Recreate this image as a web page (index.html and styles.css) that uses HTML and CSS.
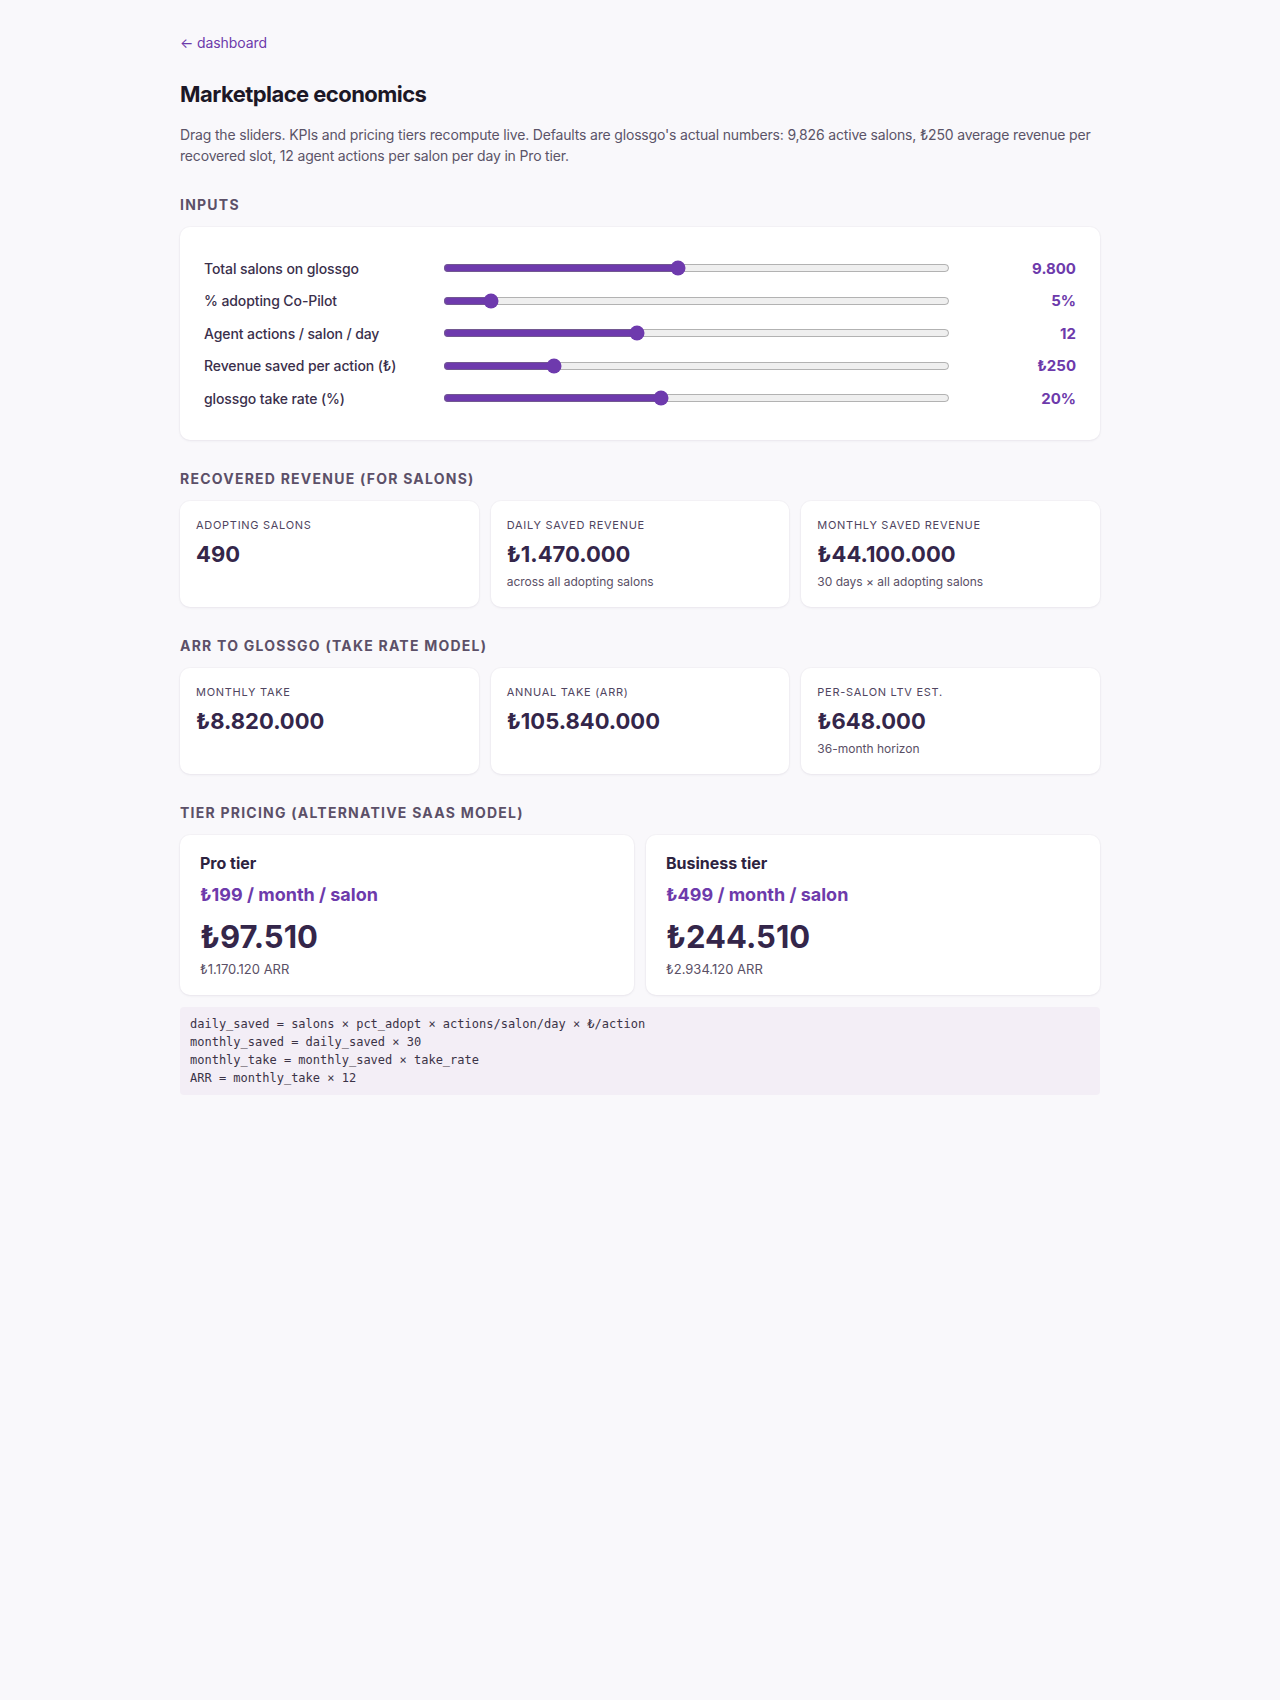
FILE: index.html
```html
<!DOCTYPE html>
<html lang="en">
<head>
<meta charset="utf-8">
<title>Marketplace economics</title>
<link rel="stylesheet" href="styles.css">
</head>
<body>
<main class="page">
  <a class="back" href="#">← dashboard</a>
  <h1 class="title">Marketplace economics</h1>
  <p class="intro">Drag the sliders. KPIs and pricing tiers recompute live. Defaults are glossgo's actual numbers: 9,826 active salons, ₺250 average revenue per recovered slot, 12 agent actions per salon per day in Pro tier.</p>

  <section class="section">
    <h2 class="section-title">Inputs</h2>
    <div class="card inputs">
      <div class="slider-row">
        <label class="slider-label" for="s1">Total salons on glossgo</label>
        <input class="slider" id="s1" type="range" min="1000" max="20000" step="100" value="9800">
        <span class="slider-value">9.800</span>
      </div>
      <div class="slider-row">
        <label class="slider-label" for="s2">% adopting Co-Pilot</label>
        <input class="slider" id="s2" type="range" min="1" max="50" step="1" value="5">
        <span class="slider-value">5%</span>
      </div>
      <div class="slider-row">
        <label class="slider-label" for="s3">Agent actions / salon / day</label>
        <input class="slider" id="s3" type="range" min="1" max="30" step="1" value="12">
        <span class="slider-value">12</span>
      </div>
      <div class="slider-row">
        <label class="slider-label" for="s4">Revenue saved per action (₺)</label>
        <input class="slider" id="s4" type="range" min="50" max="1000" step="10" value="250">
        <span class="slider-value">₺250</span>
      </div>
      <div class="slider-row">
        <label class="slider-label" for="s5">glossgo take rate (%)</label>
        <input class="slider" id="s5" type="range" min="5" max="40" step="1" value="20">
        <span class="slider-value">20%</span>
      </div>
    </div>
  </section>

  <section class="section">
    <h2 class="section-title">Recovered revenue (for salons)</h2>
    <div class="kpi-grid">
      <div class="card kpi">
        <div class="kpi-label">Adopting salons</div>
        <div class="kpi-value">490</div>
      </div>
      <div class="card kpi">
        <div class="kpi-label">Daily saved revenue</div>
        <div class="kpi-value">₺1.470.000</div>
        <div class="kpi-sub">across all adopting salons</div>
      </div>
      <div class="card kpi">
        <div class="kpi-label">Monthly saved revenue</div>
        <div class="kpi-value">₺44.100.000</div>
        <div class="kpi-sub">30 days × all adopting salons</div>
      </div>
    </div>
  </section>

  <section class="section">
    <h2 class="section-title">ARR to glossgo (take rate model)</h2>
    <div class="kpi-grid">
      <div class="card kpi">
        <div class="kpi-label">Monthly take</div>
        <div class="kpi-value">₺8.820.000</div>
      </div>
      <div class="card kpi">
        <div class="kpi-label">Annual take (ARR)</div>
        <div class="kpi-value">₺105.840.000</div>
      </div>
      <div class="card kpi">
        <div class="kpi-label">Per-salon LTV est.</div>
        <div class="kpi-value">₺648.000</div>
        <div class="kpi-sub">36-month horizon</div>
      </div>
    </div>
  </section>

  <section class="section">
    <h2 class="section-title">Tier pricing (alternative SaaS model)</h2>
    <div class="tier-grid">
      <div class="card tier">
        <div class="tier-name">Pro tier</div>
        <div class="tier-price">₺199 / month / salon</div>
        <div class="tier-total">₺97.510</div>
        <div class="tier-arr">₺1.170.120 ARR</div>
      </div>
      <div class="card tier">
        <div class="tier-name">Business tier</div>
        <div class="tier-price">₺499 / month / salon</div>
        <div class="tier-total">₺244.510</div>
        <div class="tier-arr">₺2.934.120 ARR</div>
      </div>
    </div>
    <pre class="formula">daily_saved = salons × pct_adopt × actions/salon/day × ₺/action
monthly_saved = daily_saved × 30
monthly_take = monthly_saved × take_rate
ARR = monthly_take × 12</pre>
  </section>
</main>
</body>
</html>
```

FILE: styles.css
```css
* { box-sizing: border-box; }

html, body {
  margin: 0;
  padding: 0;
  background: #f9f8fb;
}

body {
  font-family: Inter, "Noto Sans", "DejaVu Sans", sans-serif;
  color: #2e2540;
  -webkit-font-smoothing: antialiased;
}

.page {
  max-width: 920px;
  margin: 0 auto;
  padding: 32px 0 40px;
}

.back {
  display: inline-block;
  color: #6d3aab;
  text-decoration: none;
  font-size: 14px;
  line-height: 20px;
  letter-spacing: -0.1px;
}

.title {
  margin: 26px 0 0;
  font-size: 22px;
  line-height: 30px;
  font-weight: 700;
  color: #1c1726;
  letter-spacing: -0.025em;
}

.intro {
  margin: 15px 0 0;
  font-size: 14px;
  line-height: 21px;
  letter-spacing: -0.17px;
  color: #5b5468;
}

.section { margin-top: 29px; }
.section:first-of-type { margin-top: 29px; }

.section-title {
  margin: 0 0 12px;
  font-size: 14px;
  line-height: 20px;
  font-weight: 700;
  letter-spacing: 0.088em;
  text-transform: uppercase;
  color: #5c5068;
}

.card {
  background: #ffffff;
  border-radius: 10px;
  box-shadow: 0 1px 3px rgba(40, 20, 60, 0.06), 0 0 0 1px rgba(40, 20, 60, 0.02);
}

.inputs { padding: 25px 24px 25px; }

.slider-row {
  display: grid;
  grid-template-columns: 219px 1fr 106px;
  column-gap: 20px;
  align-items: center;
  height: 32.5px;
}

.slider-label {
  font-size: 14px;
  font-weight: 500;
  letter-spacing: -0.1px;
  color: #3a2f4b;
}

.slider {
  width: 100%;
  margin: 0;
  accent-color: #6e3aad;
}

.slider-value {
  text-align: right;
  font-size: 15px;
  font-weight: 700;
  color: #6d3aab;
}

.kpi-grid {
  display: grid;
  grid-template-columns: repeat(3, 1fr);
  gap: 12px;
}

.kpi { padding: 16px; min-height: 104px; }

.kpi-label {
  font-size: 11px;
  line-height: 16px;
  font-weight: 400;
  letter-spacing: 0.065em;
  text-transform: uppercase;
  color: #4f4560;
}

.kpi-value {
  margin-top: 6px;
  font-size: 22px;
  line-height: 30px;
  font-weight: 700;
  color: #34264a;
}

.kpi-sub {
  margin-top: 4px;
  font-size: 12px;
  line-height: 18px;
  color: #5a5066;
}

.tier-grid {
  display: grid;
  grid-template-columns: 1fr 1fr;
  gap: 12px;
}

.tier { padding: 16px 20px; }

.tier-name {
  font-size: 16px;
  line-height: 24px;
  font-weight: 700;
  color: #2d2340;
}

.tier-price {
  margin-top: 6px;
  font-size: 18px;
  line-height: 27px;
  font-weight: 700;
  color: #6d3aab;
}

.tier-total {
  margin-top: 10px;
  font-size: 31px;
  line-height: 38px;
  font-weight: 700;
  color: #34264a;
}

.tier-arr {
  margin-top: 4px;
  font-size: 13px;
  line-height: 19px;
  color: #5a5066;
}

.formula {
  margin: 12px 0 0;
  padding: 8px 10px;
  background: #f3eef6;
  border-radius: 4px;
  font-family: "DejaVu Sans Mono", "Liberation Mono", monospace;
  font-size: 12px;
  line-height: 18px;
  color: #3b3347;
}
```
